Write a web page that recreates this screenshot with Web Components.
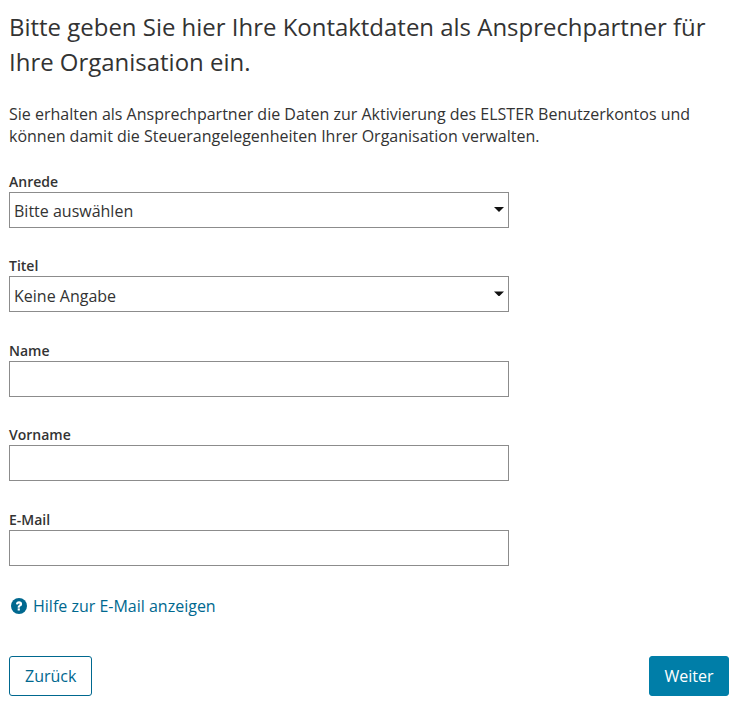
<!DOCTYPE html>
<html lang="de">
<head>
<meta charset="utf-8">
<title>Kontaktdaten</title>
<style>
	html, body { margin: 0; background: #fff; }
	body { font-family: "Open Sans", sans-serif; color: #333; }
</style>
</head>
<body>
<template id="tpl-page">
	<style>
		:host { display: block; padding: 9px 17px 12px 9px; box-sizing: border-box; width: 746px; height: 708px; overflow: hidden; }
		h1 { margin: 0; font-size: 23.96px; font-weight: 400; line-height: 35px; }
		p { margin: 24px 0 25px; font-size: 16px; line-height: 22px; }
		.fields { display: flex; flex-direction: column; gap: 28.4px; width: 500px; }
		.footer { display: flex; justify-content: space-between; margin-top: 39px; }
	</style>
	<h1><slot name="title"></slot></h1>
	<p><slot name="intro"></slot></p>
	<div class="fields"><slot name="field"></slot></div>
	<slot name="help"></slot>
	<div class="footer"><slot name="actions"></slot></div>
</template>

<template id="tpl-field">
	<style>
		:host { display: block; }
		label { display: block; font-size: 14px; font-weight: 600; line-height: 20px; }
		.box { position: relative; height: 36px; box-sizing: border-box; border: 1px solid #8c8c8c; background: #fff; font-size: 16px; line-height: 34px; padding: 1.15px 0 0 4px; }
		.arrow { position: absolute; right: 4px; top: 14px; width: 10px; height: 5px; background: #111; clip-path: polygon(0 0, 100% 0, 50% 100%); }
	</style>
	<label></label>
	<div class="box"><slot></slot></div>
</template>

<template id="tpl-help">
	<style>
		:host { display: flex; align-items: center; gap: 6px; margin: 29px 0 0 2px; color: #00688f; font-size: 16px; line-height: 22px; }
		svg { width: 16px; height: 16px; }
	</style>
	<svg viewBox="0 0 17 17" aria-hidden="true">
		<circle cx="8.5" cy="8.5" r="8.5" fill="#00688f"/>
		<path d="M5.3 6.6c0-1.9 1.4-3.1 3.3-3.1s3.2 1.1 3.2 2.8c0 1.2-.6 2-1.6 2.5-.7.4-.9.7-.9 1.3v.3H7.1v-.5c0-1.1.4-1.7 1.2-2.2.7-.4 1-.7 1-1.2s-.3-.7-.8-.7c-.6 0-.9.4-1 1z" fill="#fff"/>
		<rect x="7.1" y="11" width="2.3" height="2.3" fill="#fff"/>
	</svg>
	<span><slot></slot></span>
</template>

<template id="tpl-button">
	<style>
		:host { display: block; }
		button { display: block; height: 40px; box-sizing: border-box; border: 1px solid #00688f; border-radius: 3px; font: 400 16px "Open Sans", sans-serif; cursor: pointer; background: #fff; color: #00688f; padding: 0 15px; }
		:host([primary]) button { width: 80px; padding: 0; background: #007ea8; border-color: #007ea8; color: #fff; }
	</style>
	<button type="button"><slot></slot></button>
</template>

<script>
	function fromTemplate(el, id) {
		el.attachShadow({ mode: 'open' });
		el.shadowRoot.appendChild(document.getElementById(id).content.cloneNode(true));
	}

	class ContactPage extends HTMLElement {
		constructor() {
			super();
			fromTemplate(this, 'tpl-page');
		}
	}

	class FormField extends HTMLElement {
		constructor() {
			super();
			fromTemplate(this, 'tpl-field');
		}

		connectedCallback() {
			this.shadowRoot.querySelector('label').textContent = this.getAttribute('label');
			if (this.hasAttribute('select')) {
				const arrow = document.createElement('span');
				arrow.className = 'arrow';
				this.shadowRoot.querySelector('.box').appendChild(arrow);
			}
		}
	}

	class HelpLink extends HTMLElement {
		constructor() {
			super();
			fromTemplate(this, 'tpl-help');
		}
	}

	class ActionButton extends HTMLElement {
		constructor() {
			super();
			fromTemplate(this, 'tpl-button');
		}
	}

	customElements.define('contact-page', ContactPage);
	customElements.define('form-field', FormField);
	customElements.define('help-link', HelpLink);
	customElements.define('action-button', ActionButton);
</script>

<contact-page>
	<span slot="title">Bitte geben Sie hier Ihre Kontaktdaten als Ansprechpartner für Ihre Organisation ein.</span>
	<span slot="intro">Sie erhalten als Ansprechpartner die Daten zur Aktivierung des ELSTER Benutzerkontos und können damit die Steuerangelegenheiten Ihrer Organisation verwalten.</span>
	<form-field slot="field" label="Anrede" select>Bitte auswählen</form-field>
	<form-field slot="field" label="Titel" select>Keine Angabe</form-field>
	<form-field slot="field" label="Name"></form-field>
	<form-field slot="field" label="Vorname"></form-field>
	<form-field slot="field" label="E-Mail"></form-field>
	<help-link slot="help">Hilfe zur E-Mail anzeigen</help-link>
	<action-button slot="actions">Zurück</action-button>
	<action-button slot="actions" primary>Weiter</action-button>
</contact-page>
</body>
</html>
